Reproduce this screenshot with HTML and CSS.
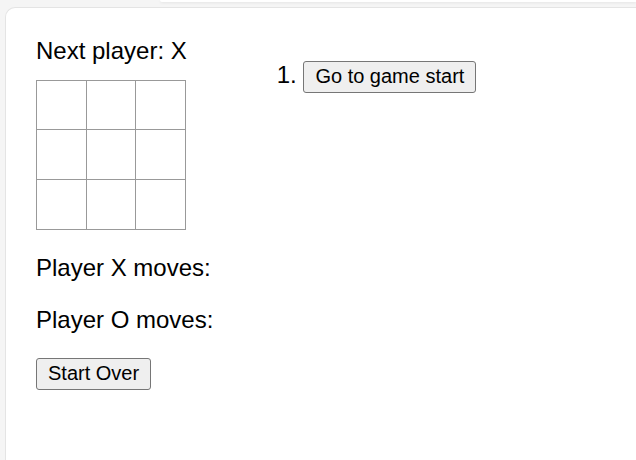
FILE: index.html
```html
<!DOCTYPE html>
<html>
<head>
<meta charset="utf-8">
<link rel="stylesheet" href="styles.css">
</head>
<body>
<div class="topbar"></div>
<div class="card">
  <div class="game">
    <div class="game-board">
      <div class="status">Next player: X</div>
      <div class="board">
        <button class="square"></button><button class="square"></button><button class="square"></button>
        <button class="square"></button><button class="square"></button><button class="square"></button>
        <button class="square"></button><button class="square"></button><button class="square"></button>
      </div>
      <p class="moves">Player X moves:</p>
      <p class="moves">Player O moves:</p>
      <button class="btn">Start Over</button>
    </div>
    <div class="game-info">
      <ol class="history">
        <li><button class="btn">Go to game start</button></li>
      </ol>
    </div>
  </div>
</div>
</body>
</html>
```
FILE: styles.css
```css
html, body {
  margin: 0;
  padding: 0;
  background: #f5f5f5;
  height: 100%;
  overflow: hidden;
}
body {
  display: flex;
  flex-direction: column;
  font-family: "Liberation Sans", Arial, sans-serif;
  font-size: 24px;
  color: #000;
}
.topbar {
  flex: none;
  margin-left: 160px;
  height: 2px;
  background: #fff;
  border-bottom-left-radius: 8px;
  box-shadow: 0 1px 3px rgba(0, 0, 0, 0.08);
}
.card {
  flex: 1;
  margin-top: 5px;
  margin-left: 5px;
  background: #fff;
  border: 1px solid #e4e4e4;
  border-right: none;
  border-bottom: none;
  border-top-left-radius: 10px;
  padding: 29px 30px 0 30px;
}
.game {
  display: flex;
  flex-direction: row;
  align-items: flex-start;
}
.status {
  margin-bottom: 15px;
}
.board {
  display: grid;
  grid-template-columns: 50px 49px 50px;
  grid-template-rows: 49px 50px 50px;
  width: 149px;
  border-top: 1px solid #999;
  border-left: 1px solid #999;
}
.square {
  appearance: none;
  background: #fff;
  border: none;
  border-right: 1px solid #999;
  border-bottom: 1px solid #999;
  margin: 0;
  padding: 0;
}
.moves {
  margin: 24px 0;
}
.btn {
  font-family: "Liberation Sans", Arial, sans-serif;
  font-size: 20px;
  color: #000;
  background: #efefef;
  border: 1px solid #767676;
  border-radius: 3px;
  padding: 3px 11px 4px;
  margin: 0;
}
.game-info {
  margin-left: 30px;
}
.history {
  margin: 24px 0;
  padding-left: 60px;
}
```
